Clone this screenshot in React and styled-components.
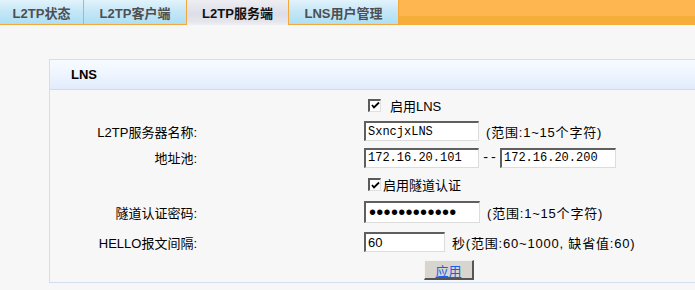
import React from 'react';
import styled, { createGlobalStyle } from 'styled-components';

const GlobalStyle = createGlobalStyle`
  html, body {
    margin: 0;
    padding: 0;
    background: #f7f7f7;
    overflow: hidden;
  }
  body {
    font-family: "Liberation Sans", "Noto Sans CJK SC", sans-serif;
    font-size: 13px;
    color: #000;
  }
`;

const tabs = [
  { label: 'L2TP状态', width: 84 },
  { label: 'L2TP客户端', width: 103 },
  { label: 'L2TP服务端', width: 102, active: true },
  { label: 'LNS用户管理', width: 110 },
];

const Checkmark = () => (
  <svg width="9" height="9" viewBox="0 0 9 9">
    <polyline points="1,4 3,6.5 8,1.5" fill="none" stroke="#000" strokeWidth="1.8" />
  </svg>
);

const App = () => (
  <>
    <GlobalStyle />
    <TabBar>
      {tabs.map((t) => (
        <Tab key={t.label} $width={t.width} $active={t.active}>
          {t.label}
        </Tab>
      ))}
      <TabFiller />
    </TabBar>

    <Panel>
      <PanelHeader>LNS</PanelHeader>
      <Form>
        <Label $h={26} />
        <Value>
          <CheckLabel $gap={9}>
            <CheckBox><Checkmark /></CheckBox>
            启用LNS
          </CheckLabel>
        </Value>

        <Label $h={26}>L2TP服务器名称:</Label>
        <Value>
          <TextInput $w={115} defaultValue="SxncjxLNS" />
          <Hint>(范围:1~15个字符)</Hint>
        </Value>

        <Label $h={27}>地址池:</Label>
        <Value>
          <TextInput $w={115} defaultValue="172.16.20.101" />
          <Dash>--</Dash>
          <TextInput $w={116} defaultValue="172.16.20.200" />
        </Value>

        <Label $h={27} />
        <Value>
          <CheckLabel $gap={2}>
            <CheckBox><Checkmark /></CheckBox>
            启用隧道认证
          </CheckLabel>
        </Value>

        <Label $h={28}>隧道认证密码:</Label>
        <Value>
          <PasswordInput type="password" defaultValue="abcdefghijkl" />
          <Hint>(范围:1~15个字符)</Hint>
        </Value>

        <Label $h={32}>HELLO报文间隔:</Label>
        <Value>
          <TextInput $w={81} $sans defaultValue="60" />
          <Hint $left={7}>秒(范围:60~1000, 缺省值:60)</Hint>
        </Value>

        <Label $h={24} />
        <Value>
          <ApplyButton type="button">应用</ApplyButton>
        </Value>
      </Form>
    </Panel>
  </>
);

const TabBar = styled.div`
  display: flex;
  height: 25px;
`;

const Tab = styled.div`
  width: ${(p) => p.$width}px;
  flex: none;
  display: flex;
  align-items: center;
  justify-content: center;
  box-sizing: border-box;
  font-family: "Liberation Sans", "Noto Sans CJK SC", sans-serif;
  font-weight: bold;
  font-size: 13px;
  color: ${(p) => (p.$active ? '#111' : '#4d4f52')};
  border-right: 1px solid #f4a93a;
  border-bottom: ${(p) => (p.$active ? 'none' : '1px solid #f4a93a')};
  background: ${(p) =>
    p.$active
      ? 'linear-gradient(to bottom, #eeeef2 0%, #dcdee8 55%, #e4e5ec 85%, #efeff3 100%)'
      : 'linear-gradient(to bottom, #e2f3fb 0%, #c4e6f7 50%, #ade0f5 100%)'};
`;

const TabFiller = styled.div`
  flex: 1;
  background: linear-gradient(
    to bottom,
    #feb650 0%,
    #feb650 64%,
    #f6ae3a 66%,
    #f6ae3a 100%
  );
`;

const Panel = styled.div`
  margin: 34px 0 0 49px;
  width: 700px;
  border: 1px solid #d2ddef;
  border-right: none;
`;

const PanelHeader = styled.div`
  height: 29px;
  display: flex;
  align-items: center;
  padding-left: 21px;
  font-weight: bold;
  font-size: 13px;
  border-bottom: 1px solid #cfdcf0;
  background: linear-gradient(to bottom, #f7fbff 0%, #eef5ff 50%, #e1ebfb 100%);
`;

const Form = styled.div`
  display: grid;
  grid-template-columns: 147px 1fr;
  column-gap: 167px;
  padding-top: 2px;
`;

const Label = styled.div`
  height: ${(p) => p.$h}px;
  display: flex;
  align-items: center;
  justify-content: flex-end;
  white-space: nowrap;
`;

const Value = styled.div`
  display: flex;
  align-items: center;
  white-space: nowrap;
`;

const CheckLabel = styled.label`
  display: flex;
  align-items: center;
  gap: ${(p) => p.$gap}px;
  padding-left: 4px;
`;

const CheckBox = styled.span`
  width: 13px;
  height: 13px;
  box-sizing: border-box;
  display: flex;
  align-items: center;
  justify-content: center;
  background: #fff;
  border-style: solid;
  border-width: 2px 1px 1px 2px;
  border-color: #5a5a5a #e0e0e0 #e0e0e0 #5a5a5a;
`;

const TextInput = styled.input`
  width: ${(p) => p.$w}px;
  height: 20px;
  box-sizing: border-box;
  margin: 0;
  padding: 0 2px;
  font-family: ${(p) =>
    p.$sans ? '"Liberation Sans", sans-serif' : '"Liberation Mono", monospace'};
  font-size: ${(p) => (p.$sans ? 13 : 12)}px;
  color: #000;
  background: #fff;
  border-style: solid;
  border-width: 2px 1px 1px 2px;
  border-color: #5f5f5f #dcdcdc #dcdcdc #5f5f5f;
  outline: none;
`;

const PasswordInput = styled(TextInput)`
  width: 116px;
  height: 22px;
  padding: 0 3px;
  font-family: "Liberation Sans", sans-serif;
  font-size: 20px;
  letter-spacing: 0.3px;
`;

const Hint = styled.span`
  margin-left: ${(p) => (p.$left != null ? p.$left : 7)}px;
  letter-spacing: 0.8px;
`;

const Dash = styled.span`
  width: 21px;
  text-align: center;
  font-family: "Liberation Mono", monospace;
`;

const ApplyButton = styled.button`
  margin-left: 60px;
  width: 50px;
  height: 20px;
  padding: 0;
  font-family: "Liberation Sans", "Noto Sans CJK SC", sans-serif;
  font-size: 13px;
  color: #1660e8;
  background: #d8d5ce;
  border-style: solid;
  border-width: 1px 2px 2px 1px;
  border-color: #f4f4f4 #555 #555 #f4f4f4;
  text-decoration: underline;
`;

export default App;
